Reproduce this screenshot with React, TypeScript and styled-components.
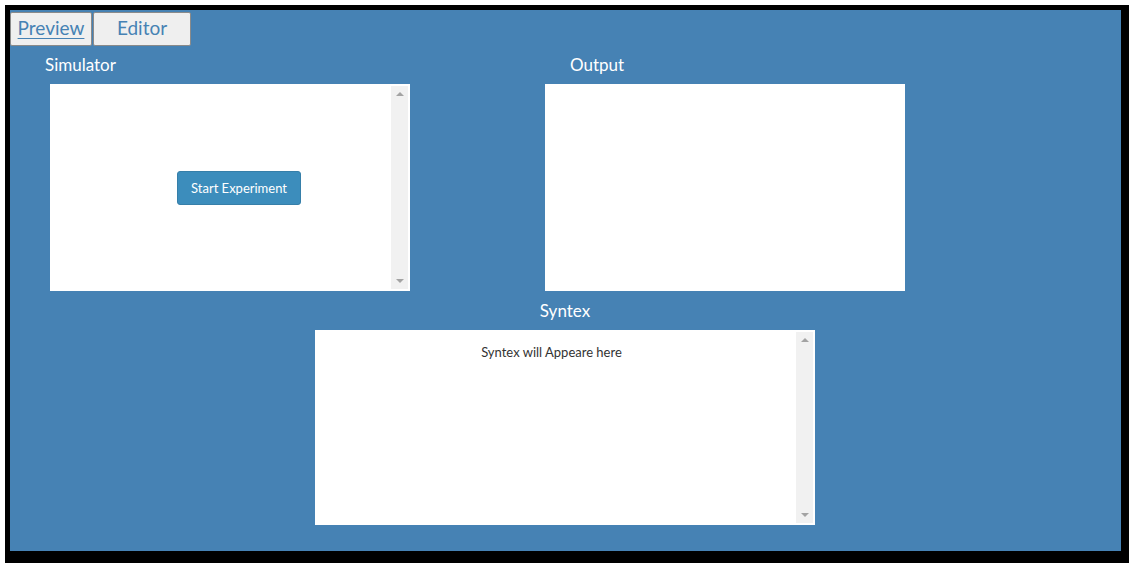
import React from 'react';
import styled, { createGlobalStyle } from 'styled-components';

const GlobalStyle = createGlobalStyle`
  html, body {
    margin: 0;
    padding: 0;
    background: #ffffff;
    overflow: hidden;
  }
  body {
    font-family: Lato, "Open Sans", "Liberation Sans", sans-serif;
  }
`;

const Frame = styled.div`
  margin: 5px 0 0 5px;
  width: 1111px;
  height: 541px;
  border-style: solid;
  border-color: #000;
  border-width: 5px 8px 12px 5px;
  background: #4682b4;
  display: flex;
  flex-direction: column;
`;

const TabBar = styled.div`
  display: flex;
  margin-top: 2px;
  gap: 1px;
`;

const Tab = styled.button<{ $active?: boolean; $width: number }>`
  width: ${(p) => p.$width}px;
  height: 34px;
  box-sizing: border-box;
  border: 1px solid #8a8a8a;
  border-radius: 2px;
  background: #efefef;
  color: #4682b4;
  font-family: inherit;
  font-size: 19px;
  padding: 0 0 4px;
  text-decoration: ${(p) => (p.$active ? 'underline' : 'none')};
  text-underline-offset: 3px;
  cursor: pointer;
`;

const TopRow = styled.div`
  display: flex;
  margin-top: 8px;
  padding-left: 40px;
  gap: 135px;
`;

const Panel = styled.div`
  display: flex;
  flex-direction: column;
`;

const Label = styled.div<{ $offset?: number }>`
  color: #ffffff;
  font-size: 17px;
  line-height: 22px;
  height: 22px;
  margin-left: ${(p) => p.$offset ?? 0}px;
  margin-bottom: 8px;
`;

const Box = styled.div<{ $w: number; $h: number }>`
  width: ${(p) => p.$w}px;
  height: ${(p) => p.$h}px;
  box-sizing: border-box;
  background: #ffffff;
  padding: 2px;
  display: flex;
`;

const Content = styled.div`
  flex: 1;
  display: flex;
`;

const SimContent = styled(Content)`
  align-items: center;
  padding-left: 125px;
`;

const SyntaxContent = styled(Content)`
  justify-content: center;
  padding: 11px 10px 0 0;
  color: #333333;
  font-size: 13px;
  line-height: 18px;
`;

const Scrollbar = styled.div`
  width: 17px;
  background: #f1f1f1;
  display: flex;
  flex-direction: column;
  justify-content: space-between;
  align-items: center;
  padding: 6px 0;
`;

const Arrow = styled.span<{ $down?: boolean }>`
  width: 0;
  height: 0;
  border-left: 4px solid transparent;
  border-right: 4px solid transparent;
  ${(p) =>
    p.$down
      ? 'border-top: 4px solid #a3a3a3;'
      : 'border-bottom: 4px solid #a3a3a3;'}
`;

const StartButton = styled.button`
  width: 124px;
  height: 34px;
  background: #3c8dbc;
  border: 1px solid #367fa9;
  border-radius: 3px;
  color: #ffffff;
  font-family: inherit;
  font-size: 13px;
  padding: 0;
  cursor: pointer;
`;

const BottomSection = styled.div`
  display: flex;
  flex-direction: column;
  align-items: center;
  margin-top: 9px;
  padding-right: 1px;
`;

const CenterLabel = styled(Label)`
  text-align: center;
`;

function ScrollTrack() {
  return (
    <Scrollbar>
      <Arrow />
      <Arrow $down />
    </Scrollbar>
  );
}

export default function App() {
  return (
    <>
      <GlobalStyle />
      <Frame>
        <TabBar>
          <Tab $active $width={82}>Preview</Tab>
          <Tab $width={98}>Editor</Tab>
        </TabBar>

        <TopRow>
          <Panel>
            <Label $offset={-5}>Simulator</Label>
            <Box $w={360} $h={207}>
              <SimContent>
                <StartButton>Start Experiment</StartButton>
              </SimContent>
              <ScrollTrack />
            </Box>
          </Panel>
          <Panel>
            <Label $offset={25}>Output</Label>
            <Box $w={360} $h={207} />
          </Panel>
        </TopRow>

        <BottomSection>
          <CenterLabel>Syntex</CenterLabel>
          <Box $w={500} $h={195}>
            <SyntaxContent>Syntex will Appeare here</SyntaxContent>
            <ScrollTrack />
          </Box>
        </BottomSection>
      </Frame>
    </>
  );
}
